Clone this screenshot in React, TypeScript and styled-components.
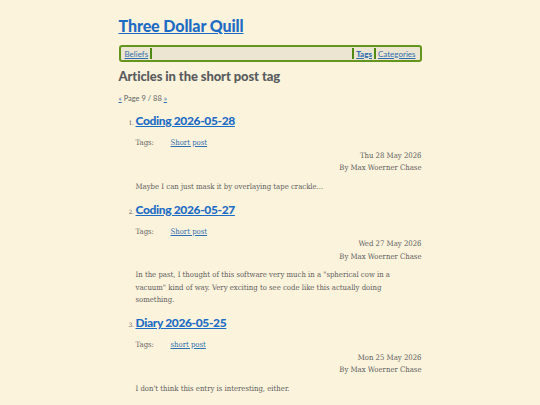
import React from 'react';
import styled, { createGlobalStyle } from 'styled-components';

const GlobalStyle = createGlobalStyle`
  html, body {
    margin: 0;
    padding: 0;
    background: #fcf3dc;
  }
  body {
    font-family: 'DejaVu Serif Condensed', 'DejaVu Serif', serif;
    font-stretch: condensed;
    color: #5a5a5a;
  }
`;

const Page = styled.div`
  width: 303px;
  margin: 0 auto;
  padding-top: 14px;
`;

const SiteTitle = styled.h1`
  margin: 0;
  font-family: Lato, 'Open Sans', sans-serif;
  font-size: 16px;
  font-weight: 900;
  line-height: 24px;
  letter-spacing: -0.1px;
  a {
    color: #1c6cc5;
    text-decoration: underline;
  }
`;

const NavBar = styled.nav`
  margin-top: 7px;
  display: flex;
  align-items: center;
  height: 11px;
  padding: 1px 2px;
  border: 2px solid #64951d;
  border-radius: 3px;
  background: #ece5d1;
  font-family: Lato, 'Open Sans', sans-serif;
  font-size: 8px;
`;

const NavLink = styled.a<{ $current?: boolean }>`
  color: #2f6fb0;
  font-weight: ${({ $current }) => ($current ? 900 : 400)};
  text-decoration: underline;
  padding: 0 2px;
`;

const Sep = styled.span`
  width: 2px;
  height: 11px;
  background: #4f8a12;
`;

const Spacer = styled.div`
  flex: 1;
`;

const Heading = styled.h2`
  margin: 5px 0 0;
  font-family: Lato, 'Open Sans', sans-serif;
  font-size: 13px;
  font-weight: 900;
  line-height: 18px;
  color: #585c5e;
  letter-spacing: -0.1px;
`;

const Pager = styled.div`
  margin-top: 9px;
  font-family: Lato, 'Open Sans', sans-serif;
  font-size: 7.5px;
  color: #666;
  a {
    color: #2f6fb0;
  }
`;

const List = styled.ol`
  margin: 9px 0 0;
  padding-left: 17px;
  font-size: 6px;
`;

const Item = styled.li`
  margin-bottom: 7.5px;
  &::marker {
    color: #555;
  }
`;

const ItemTitle = styled.a`
  font-family: Lato, 'Open Sans', sans-serif;
  font-size: 12px;
  font-weight: 900;
  line-height: 18px;
  color: #1c6cc5;
  text-decoration: underline;
  letter-spacing: -0.35px;
`;

const TagRow = styled.div`
  display: flex;
  margin-top: 7px;
  font-size: 7.7px;
  line-height: 12.5px;
  color: #666;
`;

const TagLabel = styled.span`
  width: 35px;
`;

const TagLink = styled.a`
  color: #2f6fb0;
  text-decoration: underline;
`;

const Meta = styled.div`
  text-align: right;
  font-size: 7.7px;
  line-height: 12.5px;
  color: #5f5f5f;
`;

const Excerpt = styled.p`
  max-width: 262px;
  margin: 6px 0 0;
  font-size: 7.7px;
  line-height: 12.5px;
  color: #5f5f5f;
`;

type Post = {
  title: string;
  tag: string;
  date: string;
  excerpt: string;
};

const posts: Post[] = [
  {
    title: 'Coding 2026-05-28',
    tag: 'Short post',
    date: 'Thu 28 May 2026',
    excerpt: 'Maybe I can just mask it by overlaying tape crackle...',
  },
  {
    title: 'Coding 2026-05-27',
    tag: 'Short post',
    date: 'Wed 27 May 2026',
    excerpt:
      'In the past, I thought of this software very much in a "spherical cow in a vacuum" kind of way. Very exciting to see code like this actually doing something.',
  },
  {
    title: 'Diary 2026-05-25',
    tag: 'short post',
    date: 'Mon 25 May 2026',
    excerpt: "I don't think this entry is interesting, either.",
  },
];

const App: React.FC = () => {
  return (
    <>
      <GlobalStyle />
      <Page>
        <SiteTitle>
          <a href="#">Three Dollar Quill</a>
        </SiteTitle>
        <NavBar>
          <NavLink href="#">Beliefs</NavLink>
          <Sep />
          <Spacer />
          <Sep />
          <NavLink href="#" $current>
            Tags
          </NavLink>
          <Sep />
          <NavLink href="#">Categories</NavLink>
        </NavBar>
        <Heading>Articles in the short post tag</Heading>
        <Pager>
          <a href="#">«</a> Page 9 / 88 <a href="#">»</a>
        </Pager>
        <List>
          {posts.map((post) => (
            <Item key={post.title}>
              <ItemTitle href="#">{post.title}</ItemTitle>
              <TagRow>
                <TagLabel>Tags:</TagLabel>
                <TagLink href="#">{post.tag}</TagLink>
              </TagRow>
              <Meta>{post.date}</Meta>
              <Meta>By Max Woerner Chase</Meta>
              <Excerpt>{post.excerpt}</Excerpt>
            </Item>
          ))}
        </List>
      </Page>
    </>
  );
};

export default App;
